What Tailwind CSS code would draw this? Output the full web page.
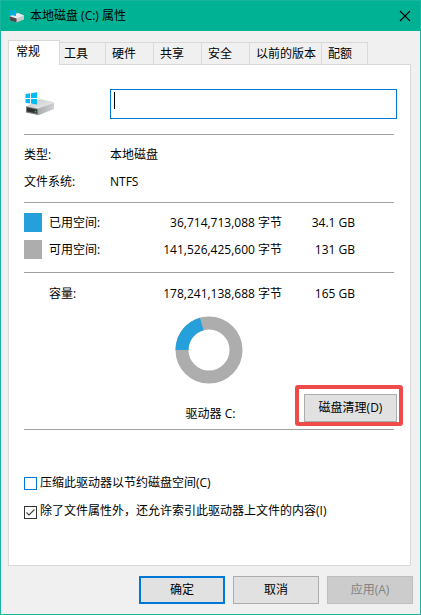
<!DOCTYPE html>
<html lang="zh-CN">
<head>
    <meta charset="UTF-8">
    <meta name="viewport" content="width=device-width, initial-scale=1.0">
    <title>本地磁盘 (C:) 属性</title>
    <script src="https://cdn.jsdelivr.net/npm/@tailwindcss/browser@4"></script>
</head>
<body class="font-['Open_Sans','Noto_Sans_CJK_SC',sans-serif] text-[12px] leading-4 text-black">
    <div class="min-h-screen flex flex-col bg-[#f0f0f0] border border-[#18b5a0]">

        <!-- title bar -->
        <header class="h-[30px] flex items-center bg-[#00b294] pl-2 pr-[9px]">
            <svg class="w-4 h-4 mr-[5px]" viewBox="0 0 32 32" aria-hidden="true">
                <path d="M2 16 L18 10 L30 15 L30 23 L15 29 L2 25 Z" fill="#c9cbcd"/>
                <path d="M2 16 L18 10 L30 15 L15 21 Z" fill="#e9eaec"/>
                <path d="M2 17 L15 21 L15 29 L2 25 Z" fill="#4a4c4e"/>
                <path d="M2 5 L7 4 L7 9 L2 9 Z M8 4 L14 3 L14 9 L8 9 Z M2 10 L7 10 L7 15 L2 14 Z M8 10 L14 10 L14 16 L8 15 Z" fill="#00adef"/>
            </svg>
            <h1>本地磁盘 (C:) 属性</h1>
            <button type="button" aria-label="关闭" class="ml-auto">
                <svg class="w-3 h-3" viewBox="0 0 12 12" aria-hidden="true">
                    <path d="M1 1 L11 11 M11 1 L1 11" stroke="#000" stroke-width="1.1" fill="none"/>
                </svg>
            </button>
        </header>

        <main class="flex-1 flex flex-col pt-[9px] px-[7px] mr-[2px]">
            <!-- tabs -->
            <nav class="flex items-end">
                <button type="button" class="relative z-10 -mb-px h-[25px] w-[52px] bg-white border border-b-0 border-[#d9d9d9] pl-[7px] pb-[3px] text-left">常规</button>
                <button type="button" class="h-[22px] w-[46px] border-t border-r border-[#d9d9d9] pl-1 text-left whitespace-nowrap">工具</button>
                <button type="button" class="h-[22px] w-12 border-t border-r border-[#d9d9d9] pl-[6px] text-left whitespace-nowrap">硬件</button>
                <button type="button" class="h-[22px] w-12 border-t border-r border-[#d9d9d9] pl-[6px] text-left whitespace-nowrap">共享</button>
                <button type="button" class="h-[22px] w-12 border-t border-r border-[#d9d9d9] pl-[6px] text-left whitespace-nowrap">安全</button>
                <button type="button" class="h-[22px] w-[72px] border-t border-r border-[#d9d9d9] pl-[6px] text-left whitespace-nowrap">以前的版本</button>
                <button type="button" class="h-[22px] w-[46px] border-t border-r border-[#d9d9d9] pl-[6px] text-left whitespace-nowrap">配额</button>
            </nav>

            <section class="flex-1 bg-white border border-[#d9d9d9] pt-6 pl-[15px] pr-[13px]">
                <div class="flex items-center">
                    <div class="w-[86px]">
                        <svg class="w-8 h-[26px]" viewBox="0 0 32 26" aria-hidden="true">
                            <defs>
                                <linearGradient id="top" x1="0" x2="1" y1="0" y2="1">
                                    <stop offset="0" stop-color="#c4c6c8"/>
                                    <stop offset="1" stop-color="#eeeff1"/>
                                </linearGradient>
                                <linearGradient id="side" x1="0" x2="1">
                                    <stop offset="0" stop-color="#a9abad"/>
                                    <stop offset="1" stop-color="#cfd0d3"/>
                                </linearGradient>
                            </defs>
                            <path d="M2 15.5 L14 9 Q16 8.200 18 8.500 L29 11 Q30 11.500 30 12.500 L14 18 Z" fill="url(#top)"/>
                            <path d="M14 17.500 L30 12 L30 18 L15 24 L14 24 Z" fill="url(#side)"/>
                            <path d="M2 15.300 L14 17.700 L14 24 L2 21.500 Z" fill="#77797b"/>
                            <path d="M3 16.600 L13 18.800 L13 22.600 L3 20.400 Z" fill="#2e3031"/>
                            <circle cx="11.500" cy="20.700" r="0.900" fill="#35c335"/>
                            <path d="M1.500 3 L6 2.300 L6 7 L1.500 7 Z M7 2.200 L13 1.300 L13 7 L7 7 Z M1.500 8 L6 8 L6 12.500 L1.500 11.800 Z M7 8 L13 8 L13 13.500 L7 12.600 Z" fill="#00bcf2"/>
                        </svg>
                    </div>
                    <input type="text" aria-label="卷标" autofocus class="flex-1 min-w-0 h-[30px] border border-[#0078d7] bg-white px-[3px] caret-transparent outline-none bg-[linear-gradient(#000,#000)] bg-no-repeat bg-[length:1px_17px] bg-[position:3px_2px]">
                </div>

                <hr class="mt-[15px] mr-[3px] border-[#a0a0a0]">

                <dl class="grid grid-cols-[86px_1fr] gap-y-[11px] mt-3">
                    <dt>类型:</dt>
                    <dd>本地磁盘</dd>
                    <dt>文件系统:</dt>
                    <dd>NTFS</dd>
                </dl>

                <hr class="mt-3 mr-[3px] border-[#a0a0a0]">

                <table class="w-full mt-[6px]">
                    <tr class="h-[27px]">
                        <td class="w-[25px]"><div class="w-[18px] h-[19px] bg-[#26a0da]"></div></td>
                        <th scope="row" class="font-normal text-left">已用空间:</th>
                        <td class="text-right">36,714,713,088 字节</td>
                        <td class="w-[115px] text-right pr-[42px]">34.1 GB</td>
                    </tr>
                    <tr class="h-[27px]">
                        <td><div class="w-[18px] h-[19px] bg-[#adadad]"></div></td>
                        <th scope="row" class="font-normal text-left">可用空间:</th>
                        <td class="text-right">141,526,425,600 字节</td>
                        <td class="text-right pr-[42px]">131 GB</td>
                    </tr>
                </table>

                <hr class="mt-[9px] mr-[3px] border-[#a0a0a0]">

                <table class="w-full mt-[7px]">
                    <tr class="h-[27px]">
                        <td class="w-[25px]"></td>
                        <th scope="row" class="font-normal text-left">容量:</th>
                        <td class="text-right">178,241,138,688 字节</td>
                        <td class="w-[115px] text-right pr-[42px]">165 GB</td>
                    </tr>
                </table>

                <!-- used / free chart, used part starts at 9 o'clock -->
                <div class="flex justify-center mt-[9px] mr-[3px]">
                    <svg class="w-[68px] h-[68px]" viewBox="0 0 68 68" aria-hidden="true">
                        <circle cx="34" cy="34" r="27" fill="none" stroke="#adadad" stroke-width="13"/>
                        <circle cx="34" cy="34" r="27" fill="none" stroke="#26a0da" stroke-width="13" pathLength="100" stroke-dasharray="20.600 79.400" transform="rotate(180 34 34)"/>
                    </svg>
                </div>

                <div class="grid grid-cols-[1fr_auto_1fr] items-end mt-[10px]">
                    <span></span>
                    <span>驱动器 C:</span>
                    <div class="relative justify-self-end">
                        <button type="button" class="block w-[93px] h-7 bg-[#e1e1e1] border border-[#adadad]">磁盘清理(D)</button>
                        <span class="absolute -top-[9px] -bottom-1 -left-[9px] -right-[6px] border-4 border-[#f04b4b] rounded-[3px] pointer-events-none"></span>
                    </div>
                </div>

                <hr class="mt-[7px] mr-[3px] border-[#a0a0a0]">

                <div class="flex items-center gap-[3px] mt-[45px]">
                    <input type="checkbox" id="compress" class="appearance-none w-[13px] h-[13px] border border-[#0078d7] bg-white">
                    <label for="compress">压缩此驱动器以节约磁盘空间(C)</label>
                </div>
                <div class="flex items-end gap-[3px] mt-3">
                    <span class="relative w-[13px] h-[13px]">
                        <input type="checkbox" id="index" checked class="block appearance-none w-[13px] h-[13px] border border-[#333333] bg-white">
                        <svg class="absolute inset-0 pointer-events-none" viewBox="0 0 13 13" aria-hidden="true">
                            <path d="M2.500 6.500 L5 9 L10.500 3.500" fill="none" stroke="#444" stroke-width="1.200"/>
                        </svg>
                    </span>
                    <label for="index">除了文件属性外，还允许索引此驱动器上文件的内容(I)</label>
                </div>
            </section>
        </main>

        <footer class="flex justify-end gap-2 pt-[10px] pb-[10px] pr-[7px]">
            <button type="button" class="w-[86px] h-7 bg-[#e1e1e1] border-2 border-[#0078d7]">确定</button>
            <button type="button" class="w-[86px] h-7 bg-[#e1e1e1] border border-[#adadad]">取消</button>
            <button type="button" disabled class="w-[86px] h-7 bg-[#cccccc] border border-[#bfbfbf] text-[#838383]">应用(A)</button>
        </footer>
    </div>
</body>
</html>
